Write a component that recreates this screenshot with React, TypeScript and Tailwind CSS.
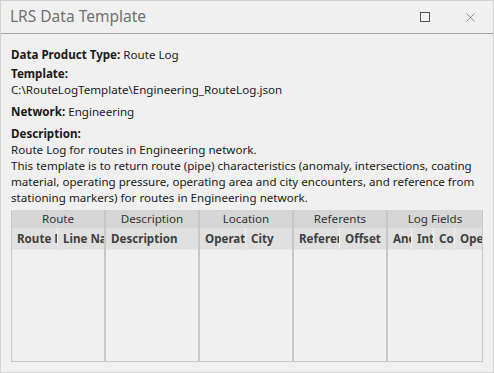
import { X } from 'lucide-react';

const groups = [
  { name: 'Route', cols: [{ label: 'Route Name', w: 'w-[46px]' }, { label: 'Line Name', w: 'flex-1' }] },
  { name: 'Description', cols: [{ label: 'Description', w: 'flex-1' }] },
  { name: 'Location', cols: [{ label: 'Operating Area', w: 'w-[46px]' }, { label: 'City', w: 'flex-1' }] },
  { name: 'Referents', cols: [{ label: 'Referent', w: 'w-[46px]' }, { label: 'Offset', w: 'flex-1' }] },
  {
    name: 'Log Fields',
    cols: [
      { label: 'Anomaly', w: 'w-[24px]' },
      { label: 'Intersections', w: 'w-[22px]' },
      { label: 'Coating', w: 'w-[21px]' },
      { label: 'Operating', w: 'flex-1' },
    ],
  },
];

const App = () => {
  return (
    <div
      className="w-[494px] h-[373px] bg-[#f0f0f0] border border-[#d2d2d2] flex flex-col text-[#1a1a1a]"
      style={{ fontFamily: '"Noto Sans", "Open Sans", sans-serif' }}
    >
      {/* Title bar */}
      <div className="h-[33px] shrink-0 border-b border-[#a3a3a3] flex items-center pl-[9px] pr-[15px]">
        <span className="text-[15.5px] text-[#707070] leading-none">LRS Data Template</span>
        <div className="ml-auto flex items-center gap-[33px]">
          <div className="w-[10px] h-[10px] border border-[#555]"></div>
          <X className="w-[15px] h-[15px] text-[#555]" strokeWidth={1} />
        </div>
      </div>

      {/* Body */}
      <div className="flex-1 flex flex-col px-[10px] pt-[13px] text-[11.6px] leading-[16px]">
        <div>
          <span className="font-bold">Data Product Type:</span> Route Log
        </div>
        <div className="mt-[3px] font-bold">Template:</div>
        <div>C:\RouteLogTemplate\Engineering_RouteLog.json</div>
        <div className="mt-[6px]">
          <span className="font-bold">Network:</span> Engineering
        </div>
        <div className="mt-[6px] font-bold">Description:</div>
        <div className="whitespace-nowrap">
          Route Log for routes in Engineering network.
          <br />
          This template is to return route (pipe) characteristics (anomaly, intersections, coating
          <br />
          material, operating pressure, operating area and city encounters, and reference from
          <br />
          stationing markers) for routes in Engineering network.
        </div>

        {/* Table */}
        <div className="mt-[4px] h-[152px] grid grid-cols-5 border border-[#c8c8c8] border-t-0">
          {groups.map((g, gi) => (
            <div
              key={g.name}
              className={`flex flex-col min-w-0 ${gi < groups.length - 1 ? 'border-r-2 border-[#c8c8c8]' : ''}`}
            >
              <div className="h-[18px] bg-[#d6d6d6] text-[#333] text-center leading-[18px] whitespace-nowrap">
                {g.name}
              </div>
              <div className="h-[22px] bg-[#e0e0e0] flex border-b border-[#e8e8e8]">
                {g.cols.map((c, ci) => (
                  <div
                    key={c.label}
                    className={`${c.w} min-w-0 overflow-hidden whitespace-nowrap font-bold text-[#404040] leading-[22px] pl-[5px] ${ci < g.cols.length - 1 ? 'border-r border-[#f2f2f2]' : ''}`}
                  >
                    {c.label}
                  </div>
                ))}
              </div>
              <div className="flex-1"></div>
            </div>
          ))}
        </div>
      </div>
    </div>
  );
};

export default App;
